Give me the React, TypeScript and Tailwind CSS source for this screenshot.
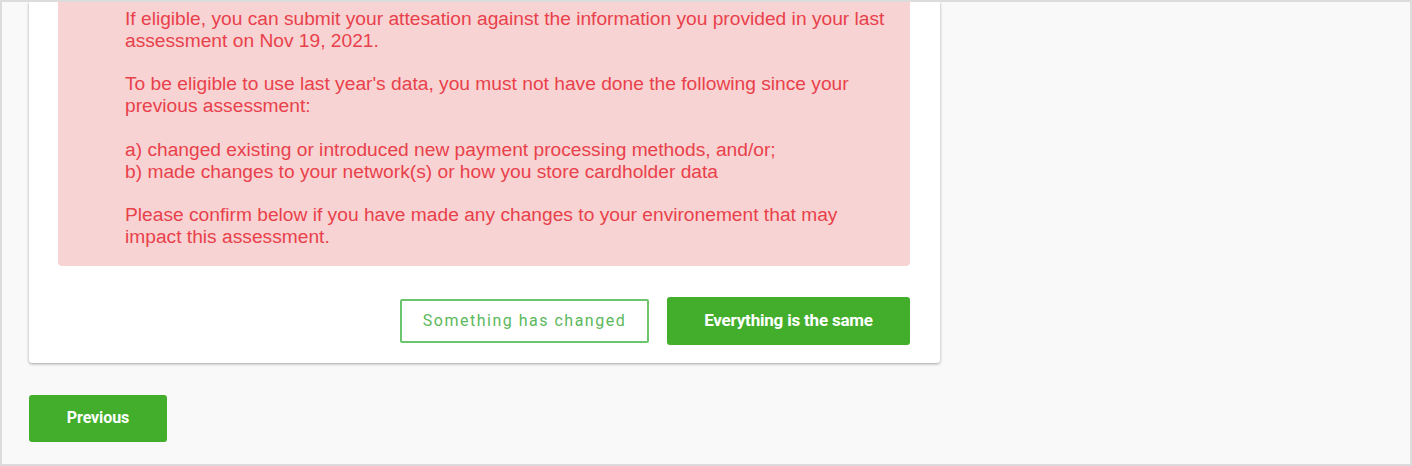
export default function App() {
  return (
    <div className="w-[1412px] h-[466px] overflow-hidden border-2 border-[#dcdcdc] bg-[#f9f9f9] font-['Liberation_Sans',Arial,sans-serif]">
      <div className="pl-[27px]">
        {/* Card */}
        <div className="w-[911px] bg-white pl-[29px] pr-[30px] pb-[18px] shadow-[0_1px_3px_rgba(0,0,0,0.35)] rounded-b-[3px]">
          {/* Alert */}
          <div className="bg-[#f8d3d3] rounded-b-[4px] pl-[67px] pr-[20px] pt-[6px] pb-[18px] text-[19.2px] leading-[21.8px] text-[#e8414b] whitespace-nowrap">
            <p>
              If eligible, you can submit your attesation against the information you provided in your last
              <br />
              assessment on Nov 19, 2021.
            </p>
            <p className="mt-[21.8px]">
              To be eligible to use last year's data, you must not have done the following since your
              <br />
              previous assessment:
            </p>
            <p className="mt-[21.8px]">
              a) changed existing or introduced new payment processing methods, and/or;
              <br />
              b) made changes to your network(s) or how you store cardholder data
            </p>
            <p className="mt-[21.8px]">
              Please confirm below if you have made any changes to your environement that may
              <br />
              impact this assessment.
            </p>
          </div>
          {/* Actions */}
          <div className="flex justify-end items-center gap-[18px] mt-[31px]">
            <button className="w-[249px] h-[44px] border-2 border-[#6cc46c] rounded-[2px] bg-white text-[#5cb85c] text-[16px] tracking-[1.5px] font-['Roboto',sans-serif]">
              Something has changed
            </button>
            <button className="w-[243px] h-[48px] rounded-[3px] bg-[#42ae2c] text-white text-[17px] font-bold font-['Roboto',sans-serif] tracking-[-0.2px]">
              Everything is the same
            </button>
          </div>
        </div>
        {/* Footer */}
        <div className="mt-[32px]">
          <button className="w-[138px] h-[47px] rounded-[3px] bg-[#42ae2c] text-white text-[16px] font-bold font-['Roboto',sans-serif] tracking-[-0.1px]">
            Previous
          </button>
        </div>
      </div>
    </div>
  );
}
